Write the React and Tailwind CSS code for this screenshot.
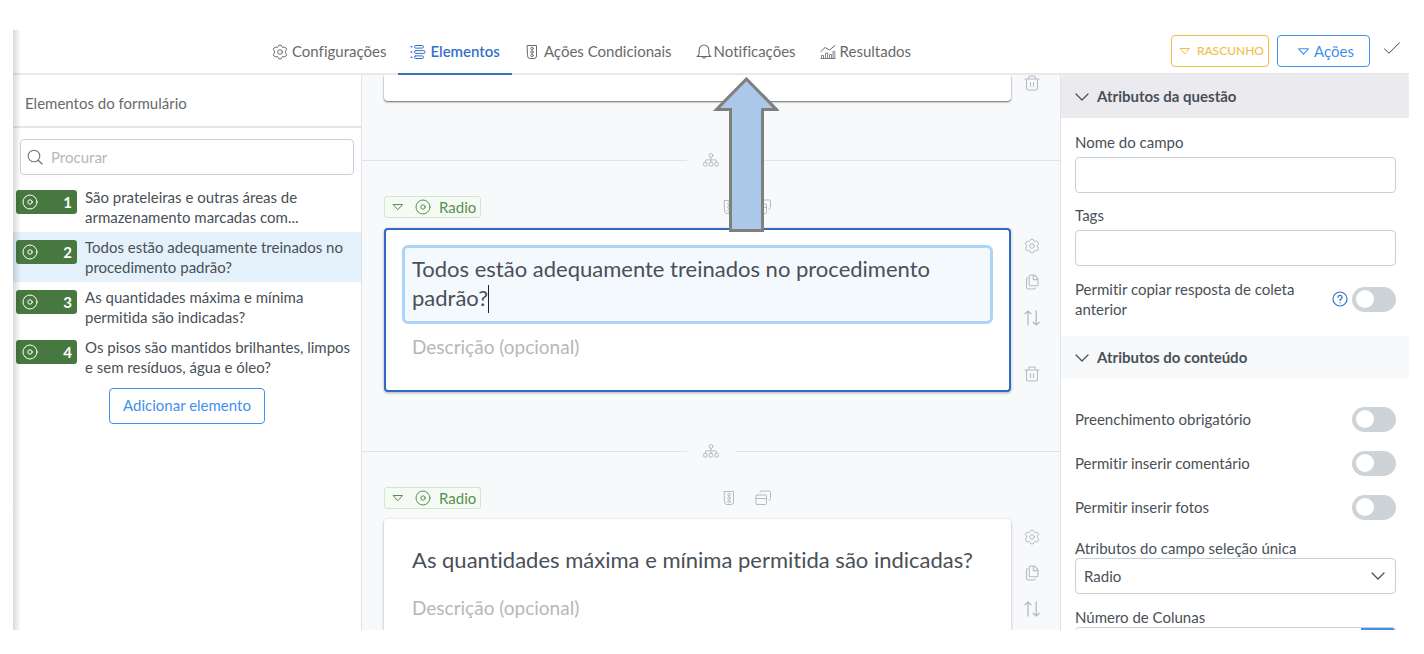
import React, { useId } from "react";

function Icon({ size = 16, box = 16, className = "", children }) {
  return (
    <svg
      width={size}
      height={size}
      viewBox={`0 0 ${box} ${box}`}
      fill="none"
      stroke="currentColor"
      strokeWidth="1"
      strokeLinecap="round"
      strokeLinejoin="round"
      className={`shrink-0 ${className}`}
      aria-hidden="true"
    >
      {children}
    </svg>
  );
}

const GearIcon = (p) => (
  <Icon {...p}>
    <path d="M6.5 1.5Q8 .2 9.5 1.5L10.1 3Q10.4 3.5 11 3.4L12.7 3.2Q14.6 3.7 14.6 5.6L13.6 7.1Q13.2 8 13.6 8.9L14.6 10.4Q14.6 12.3 12.7 12.8L11 12.6Q10.4 12.5 10.1 13L9.5 14.5Q8 15.8 6.5 14.5L5.9 13Q5.6 12.5 5 12.6L3.3 12.8Q1.4 12.3 1.4 10.4L2.4 8.9Q2.8 8 2.4 7.1L1.4 5.6Q1.4 3.7 3.3 3.2L5 3.4Q5.6 3.5 5.9 3Z" />
    <circle cx="8" cy="8" r="2.3" />
  </Icon>
);

const ListIcon = (p) => (
  <Icon {...p}>
    <path d="M1.200 2.800h.6M1.200 8h.6M1.200 13.200h.6" strokeWidth="1.500" />
    <rect x="4.500" y="1.500" width="9" height="2.600" rx="1.200" />
    <rect x="4.500" y="6.600" width="10.500" height="2.800" rx="1.200" />
    <rect x="4.500" y="11.900" width="9" height="2.600" rx="1.200" />
  </Icon>
);

const TrafficIcon = (p) => (
  <Icon {...p}>
    <path d="M3.500 1.500h9v10.500a2.500 2.500 0 0 1-2.500 2.500H6A2.500 2.500 0 0 1 3.500 12Z" />
    <circle cx="8" cy="4.500" r="1.300" strokeWidth=".9" />
    <circle cx="8" cy="8" r="1.300" strokeWidth=".9" />
    <circle cx="8" cy="11.500" r="1.300" strokeWidth=".9" />
  </Icon>
);

const BellIcon = (p) => (
  <Icon {...p}>
    <path
      d="M1 12.500c1.500-.6 2.200-1.500 2.200-3.300V5.800a4.800 4.800 0 0 1 9.600 0v3.400c0 1.800.7 2.700 2.200 3.300ZM6.300 12.700q1.700 3 3.400 0"
      strokeWidth="1.100"
    />
  </Icon>
);

const ChartIcon = (p) => (
  <Icon {...p}>
    <path d="M1 7.500l4-4 4.500 2.500L15 1.500" />
    <path
      d="M1.500 14.500v-3h2v3M5.500 14.500v-5.500h2v5.500M9.500 14.500v-4h2v4M13 14.500v-7h1.800v7M1 14.500h14"
      strokeWidth=".8"
    />
  </Icon>
);

const TriangleIcon = (p) => (
  <Icon box={12} {...p}>
    <path d="M1.500 3.500h9L6 8.500Z" />
  </Icon>
);

const CheckIcon = (p) => (
  <Icon {...p}>
    <path d="M.500 9l4.500 4.200L15.500 2.800" />
  </Icon>
);

const ChevronIcon = (p) => (
  <Icon {...p}>
    <path d="M2 5l6 6 6-6" strokeWidth="1.300" />
  </Icon>
);

const SearchIcon = (p) => (
  <Icon {...p}>
    <circle cx="7" cy="7" r="5.800" strokeWidth="1.100" />
    <path d="M11.200 11.200L15 15" strokeWidth="1.300" />
  </Icon>
);

const RadioIcon = (p) => (
  <Icon {...p}>
    <circle cx="8" cy="8" r="7" />
    <circle cx="8" cy="8" r="2.200" />
  </Icon>
);

const TreeIcon = (p) => (
  <Icon {...p}>
    <circle cx="8" cy="3.500" r="1.900" />
    <path d="M8 5.400v4.600M2.500 10v-1.500q0-.6.6-.6h9.800q.6 0 .6.600V10" />
    <rect x=".6" y="10.500" width="3.500" height="3.500" rx=".8" />
    <rect x="6.200" y="10.500" width="3.600" height="3.500" rx=".8" />
    <rect x="11.900" y="10.500" width="3.500" height="3.500" rx=".8" />
  </Icon>
);

const WindowsIcon = (p) => (
  <Icon {...p}>
    <rect x="1" y="5" width="10.500" height="9.500" rx="1" />
    <path d="M1 8.500h10.500M5 2.500V2a1 1 0 0 1 1-1h8.500a1 1 0 0 1 1 1v6.500a2 2 0 0 1-1.500 1.900" />
  </Icon>
);

const CopyIcon = (p) => (
  <Icon {...p}>
    <path
      d="M6.500 1h3.800l3.700 3.700v5.800a1.300 1.300 0 0 1-1.300 1.300H6.500A1.300 1.300 0 0 1 5.200 10.500V2.300A1.300 1.300 0 0 1 6.500 1ZM9.300 1.200V5.600h4.500"
      strokeWidth="1.100"
    />
    <path
      d="M3.700 3.800a1.300 1.300 0 0 0-1.200 1.300v8A1.800 1.800 0 0 0 4.300 15h5.200a1.800 1.800 0 0 0 1.700-1"
      strokeWidth="1.100"
    />
  </Icon>
);

const SwapIcon = (p) => (
  <Icon {...p}>
    <path d="M4 15V1M1 3.800l3-2.800 3 2.800M12.200 1v14M9.200 12.200l3 2.800 3-2.800" strokeWidth="1.300" />
  </Icon>
);

const TrashIcon = (p) => (
  <Icon {...p}>
    <path
      d="M1 4h14M4.800 3.800V2a1 1 0 0 1 1-1h4.400a1 1 0 0 1 1 1v1.800M2.500 4v9.500a1.500 1.500 0 0 0 1.500 1.500h8a1.500 1.500 0 0 0 1.500-1.500V4M6.500 7.500v4M9.500 7.500v4"
      strokeWidth="1.100"
    />
  </Icon>
);

const HelpIcon = (p) => (
  <Icon {...p}>
    <circle cx="8" cy="8" r="7" strokeWidth="1.200" />
    <path d="M6 6.300a2 2 0 1 1 2.900 1.800c-.600.300-.900.600-.900 1.300M8 11.700v.100" strokeWidth="1.300" />
  </Icon>
);

const tabs = [
  { label: "Configurações", icon: GearIcon },
  { label: "Elementos", icon: ListIcon, active: true },
  { label: "Ações Condicionais", icon: TrafficIcon },
  { label: "Notificações", icon: BellIcon, tight: true },
  { label: "Resultados", icon: ChartIcon },
];

const elements = [
  "São prateleiras e outras áreas de armazenamento marcadas com...",
  "Todos estão adequamente treinados no procedimento padrão?",
  "As quantidades máxima e mínima permitida são indicadas?",
  "Os pisos são mantidos brilhantes, limpos e sem resíduos, água e óleo?",
];

function Header() {
  return (
    <header className="flex h-[45px] shrink-0 items-stretch border-b-2 border-[#e9e9eb]">
      <nav className="ml-[247px] flex">
        {tabs.map(({ label, icon: TabIcon, active, tight }) => (
          <a
            key={label}
            href="#"
            className={`-mb-[2px] flex items-center border-b-2 px-3 text-[15px] ${
              active ? "border-[#3572c6] font-semibold text-[#3572c6]" : "border-transparent text-[#6a6a6a]"
            } ${tight ? "gap-0.5" : "gap-1"}`}
          >
            <TabIcon />
            {label}
          </a>
        ))}
      </nav>
      <div className="ml-auto flex items-start gap-2 pt-[5px] pr-[9px]">
        <button className="flex h-8 w-[98px] items-center justify-end gap-[6px] rounded border border-[#f0bd4c] pr-1 text-xs font-medium text-[#f0bd4c]">
          <TriangleIcon size={12} />
          RASCUNHO
        </button>
        <button className="flex h-8 w-[93px] items-center justify-center gap-1 rounded border border-[#4390ea] pl-1 text-[15px] text-[#4390ea]">
          <TriangleIcon size={13} />
          Ações
        </button>
        <button aria-label="Salvar" className="mt-[5px] ml-[6px] text-[#444b52]">
          <CheckIcon />
        </button>
      </div>
    </header>
  );
}

function ElementsPanel() {
  return (
    <aside className="flex w-[349px] shrink-0 flex-col border-r border-[#dfe2e8] bg-white">
      <h2 className="flex h-[53px] shrink-0 items-center border-b-2 border-[#e4e4ea] pt-[6px] pl-3 text-[15px] text-[#6a6a6a]">
        Elementos do formulário
      </h2>
      <label className="mx-[7px] mt-[11px] flex h-9 shrink-0 items-center gap-2 rounded border border-[#c9d0d8] pl-[6px] text-[#6c757d]">
        <SearchIcon />
        <input
          aria-label="Procurar"
          placeholder="Procurar"
          className="min-w-0 flex-1 text-[15px] outline-none placeholder:text-[#b4b8bc]"
        />
      </label>
      <ul className="mt-[7px]">
        {elements.map((text, i) => (
          <li key={text}>
            <a
              href="#"
              className={`flex h-[50px] gap-2 pt-[5px] pr-1 pl-[3px] text-[15px] leading-5 text-[#495057] ${
                i === 1 ? "bg-[#e4f1fb]" : ""
              }`}
            >
              <span className="mt-[3px] flex h-6 w-[61px] shrink-0 items-center justify-between rounded-[3px] bg-[#47783f] pr-[5px] pl-[6px] font-bold text-white">
                <RadioIcon />
                {i + 1}
              </span>
              <span>{text}</span>
            </a>
          </li>
        ))}
      </ul>
      <button className="mt-[6px] h-9 w-[156px] self-center rounded border border-[#4390ea] pb-px text-[15px] text-[#4390ea]">
        Adicionar elemento
      </button>
    </aside>
  );
}

function IconButton({ label, icon: Glyph, className = "" }) {
  return (
    <button aria-label={label} className={className}>
      <Glyph />
    </button>
  );
}

function Divider() {
  return (
    <div className="mt-[50px] mb-[27px] flex h-[18px] items-center text-[#b5bbc3]">
      <span className="h-px flex-1 bg-[#dfe3e7]" />
      <button aria-label="Inserir elemento" className="mx-4">
        <TreeIcon />
      </button>
      <span className="h-px flex-1 bg-[#dfe3e7]" />
    </div>
  );
}

function Question({ children, active }) {
  return (
    <section className="pr-[7px] pl-[22px]">
      <div className="mr-[42px] flex items-center text-[#b5bbc3]">
        <button className="flex h-[22px] w-[97px] items-center rounded-[3px] border border-[#cfe8cc] bg-[#f5fbf4] pl-[7px] text-[15px] text-[#569150]">
          <TriangleIcon size={12} />
          <RadioIcon className="mr-2 ml-[11px]" />
          Radio
        </button>
        <div className="mr-[240px] ml-auto flex gap-[18px]">
          <IconButton label="Condições" icon={TrafficIcon} />
          <IconButton label="Duplicar" icon={WindowsIcon} />
        </div>
      </div>
      <div className="mt-[10px] flex">
        <div
          className={`h-[164px] min-w-0 flex-1 rounded bg-white px-4 shadow-[0_1px_3px_rgba(0,0,0,0.3)] ${
            active ? "border-2 border-[#2f6bc4] pt-[15px]" : "pt-5"
          }`}
        >
          {children}
        </div>
        <div className="flex w-[42px] flex-col items-center gap-5 pt-[10px] pb-[10px] text-[#b5bbc3]">
          <IconButton label="Configurar" icon={GearIcon} />
          <IconButton label="Copiar" icon={CopyIcon} />
          <IconButton label="Mover" icon={SwapIcon} />
          <IconButton label="Excluir" icon={TrashIcon} className="mt-auto" />
        </div>
      </div>
    </section>
  );
}

function DescriptionInput({ className }) {
  return (
    <input
      aria-label="Descrição"
      placeholder="Descrição (opcional)"
      className={`block h-8 w-full text-[19px] outline-none placeholder:text-[#b4b8bc] ${className}`}
    />
  );
}

function Canvas() {
  return (
    <main className="min-w-0 flex-1 overflow-hidden bg-[#f8f9fb]">
      <div className="flex h-[26px] pr-[7px] pl-[22px]">
        <div className="flex-1 rounded-b bg-white shadow-[0_1px_2px_rgba(0,0,0,0.6)]" />
        <div className="flex w-[42px] justify-center text-[#b5bbc3]">
          <IconButton label="Excluir" icon={TrashIcon} className="self-start" />
        </div>
      </div>
      <Divider />
      <Question active>
        <div className="relative">
          <textarea
            aria-label="Pergunta"
            defaultValue="Todos estão adequamente treinados no procedimento padrão?"
            className="block h-[79px] w-full resize-none overflow-hidden rounded-md border-3 border-[#add4f7] bg-[#f4f9fe] px-[7px] py-[6px] text-[22px] leading-[29px] text-[#495057] outline-none"
          />
          <span className="absolute top-10 left-[86px] h-7 w-px bg-[#222]" />
        </div>
        <DescriptionInput className="mt-[6px] px-[10px]" />
      </Question>
      <Divider />
      <Question>
        <input
          aria-label="Pergunta"
          defaultValue="As quantidades máxima e mínima permitida são indicadas?"
          className="block h-10 w-full px-3 text-[22px] text-[#495057] outline-none"
        />
        <DescriptionInput className="mt-3 px-3" />
      </Question>
    </main>
  );
}

function SectionHeader({ children, className }) {
  return (
    <button
      className={`flex h-[43px] w-full shrink-0 items-center gap-[7px] pl-[13px] text-left text-[15px] font-bold text-[#495057] ${className}`}
    >
      <ChevronIcon />
      {children}
    </button>
  );
}

function TextField({ label, className = "" }) {
  const id = useId();
  return (
    <div className={className}>
      <label htmlFor={id} className="block leading-5">
        {label}
      </label>
      <input id={id} className="mt-[5px] block h-9 w-full rounded border border-[#c9d0d8] bg-white px-2 outline-none" />
    </div>
  );
}

function Toggle({ label, help, className = "" }) {
  const id = useId();
  return (
    <div className={`flex items-center ${className}`}>
      <label htmlFor={id} className="flex-1 pr-5 leading-5">
        {label}
      </label>
      {help && (
        <button aria-label="Ajuda" className="mr-1 text-[#3572c6]">
          <HelpIcon />
        </button>
      )}
      <input
        id={id}
        type="checkbox"
        className="flex h-[25px] w-11 shrink-0 appearance-none items-center rounded-full bg-[#ced3d7] pl-1 before:block before:size-[18px] before:rounded-full before:bg-white before:content-[''] checked:justify-end checked:bg-[#4390ea] checked:pr-1"
      />
    </div>
  );
}

function AttributesPanel() {
  return (
    <aside className="flex w-[349px] shrink-0 flex-col overflow-hidden border-l border-[#dfe2e8] bg-white text-[15px] text-[#495057]">
      <SectionHeader className="rounded-t bg-[#ebebef]">Atributos da questão</SectionHeader>
      <div className="pt-[14px] pr-[13px] pb-[17px] pl-[14px]">
        <TextField label="Nome do campo" />
        <TextField label="Tags" className="mt-3" />
        <Toggle label="Permitir copiar resposta de coleta anterior" help className="mt-[13px]" />
      </div>
      <SectionHeader className="bg-[#f8f9fb]">Atributos do conteúdo</SectionHeader>
      <div className="pt-[18px] pr-[13px] pl-[14px]">
        <Toggle label="Preenchimento obrigatório" className="h-11" />
        <Toggle label="Permitir inserir comentário" className="h-11" />
        <Toggle label="Permitir inserir fotos" className="h-11" />
        <label htmlFor="field-kind" className="mt-[9px] block leading-5">
          Atributos do campo seleção única
        </label>
        <div className="relative">
          <select
            id="field-kind"
            className="block h-9 w-full appearance-none rounded border border-[#c9d0d8] bg-white px-2 outline-none"
          >
            <option>Radio</option>
          </select>
          <ChevronIcon className="pointer-events-none absolute top-[10px] right-[10px]" />
        </div>
        <label htmlFor="columns" className="mt-[13px] block leading-5">
          Número de Colunas
        </label>
        <div className="flex h-9 overflow-hidden rounded border border-[#c9d0d8]">
          <input id="columns" className="min-w-0 flex-1 px-2 outline-none" />
          <button aria-label="Aumentar" className="-my-px -mr-px w-[35px] bg-[#4390ea]" />
        </div>
      </div>
    </aside>
  );
}

export default function App() {
  return (
    <div className="h-screen bg-white pt-[30px] pr-[15px] pb-6 pl-[13px] font-[Lato,sans-serif] [font-variant-ligatures:none]">
      <div className="relative flex h-full flex-col overflow-hidden">
        <Header />
        <div className="flex min-h-0 flex-1">
          <ElementsPanel />
          <Canvas />
          <AttributesPanel />
        </div>
        <div className="pointer-events-none absolute inset-y-0 left-0 w-2 bg-linear-to-r from-black/15 to-transparent" />
        <svg
          width="68"
          height="158"
          viewBox="0 0 68 158"
          className="pointer-events-none absolute top-[45px] left-1/2"
          aria-hidden="true"
        >
          <path
            d="M35.500 4L65.500 34.500H51.500V155.500H19.500V34.500H5.500Z"
            fill="#abc8e9"
            stroke="#7f7f7f"
            strokeWidth="3"
          />
        </svg>
      </div>
    </div>
  );
}
